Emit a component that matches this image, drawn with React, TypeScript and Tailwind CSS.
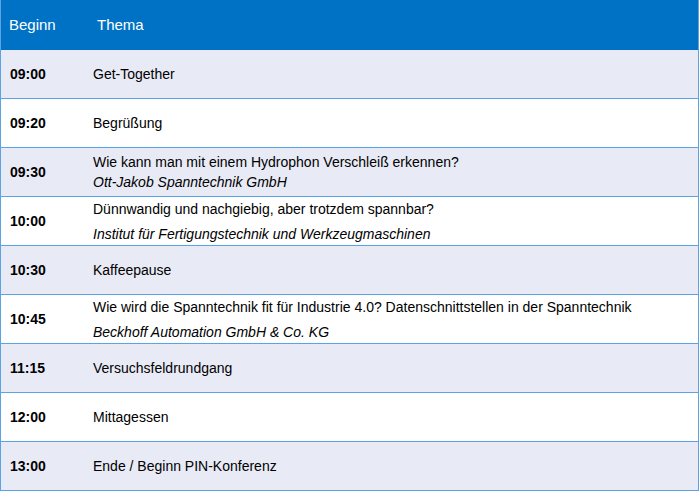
import React from "react";

type Row = { time: string; title: string; sub?: string; gap?: boolean };

const rows: Row[] = [
  { time: "09:00", title: "Get-Together" },
  { time: "09:20", title: "Begrüßung" },
  { time: "09:30", title: "Wie kann man mit einem Hydrophon Verschleiß erkennen?", sub: "Ott-Jakob Spanntechnik GmbH" },
  { time: "10:00", title: "Dünnwandig und nachgiebig, aber trotzdem spannbar?", sub: "Institut für Fertigungstechnik und Werkzeugmaschinen", gap: true },
  { time: "10:30", title: "Kaffeepause" },
  { time: "10:45", title: "Wie wird die Spanntechnik fit für Industrie 4.0? Datenschnittstellen in der Spanntechnik", sub: "Beckhoff Automation GmbH & Co. KG", gap: true },
  { time: "11:15", title: "Versuchsfeldrundgang" },
  { time: "12:00", title: "Mittagessen" },
  { time: "13:00", title: "Ende / Beginn PIN-Konferenz" },
];

export default function App() {
  return (
    <div className="w-[700px] h-[492px] bg-white" style={{ fontFamily: '"Liberation Sans", Arial, sans-serif' }}>
      <div className="w-[699px] border-l border-r border-[#5ba3e3]">
        <div className="h-[50px] bg-[#0072c6] flex items-center text-white text-[15px]">
          <div className="w-[88px] pl-[8px] pt-[1px]">Beginn</div>
          <div className="pl-[8px] pt-[1px]">Thema</div>
        </div>
        {rows.map((r, i) => (
          <div
            key={r.time}
            className={`h-[49px] flex items-center border-b border-[#5ba3e3] text-[14px] text-black ${i % 2 === 0 ? "bg-[#e8ebf6]" : "bg-white"}`}
          >
            <div className="w-[92px] pl-[9px] font-bold">{r.time}</div>
            <div className="flex flex-col">
              <div className="leading-[20px]">{r.title}</div>
              {r.sub && (
                <div className={`italic leading-[20px] ${r.gap ? "mt-[5px]" : ""}`}>{r.sub}</div>
              )}
            </div>
          </div>
        ))}
      </div>
    </div>
  );
}
